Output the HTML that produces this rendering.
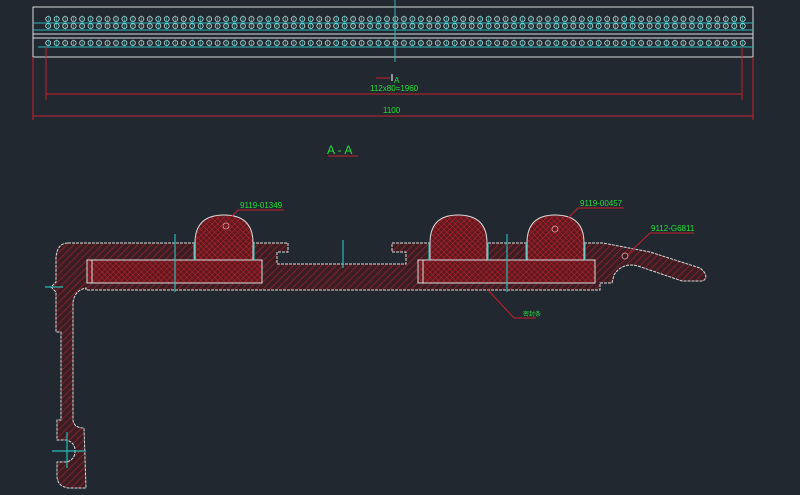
<!DOCTYPE html>
<html><head><meta charset="utf-8"><style>
html,body{margin:0;padding:0;background:#212830;overflow:hidden}
svg{display:block}
text{font-family:"Liberation Sans","Noto Sans CJK SC",sans-serif;fill:#22e03a}
</style></head><body>
<svg width="800" height="495" viewBox="0 0 800 495" xmlns="http://www.w3.org/2000/svg">
<defs>
<pattern id="circ" x="44" y="0" width="8.47" height="60" patternUnits="userSpaceOnUse">
<circle cx="4.2" cy="19" r="2.5" fill="none" stroke="#cfe8e8" stroke-width="0.8"/>
<line x1="4.2" y1="15.5" x2="4.2" y2="22.5" stroke="#2ac0c0" stroke-width="0.6"/>
<circle cx="4.2" cy="26" r="2.5" fill="none" stroke="#cfe8e8" stroke-width="0.8"/>
<line x1="4.2" y1="22.5" x2="4.2" y2="29.5" stroke="#2ac0c0" stroke-width="0.6"/>
<circle cx="4.2" cy="43" r="2.5" fill="none" stroke="#cfe8e8" stroke-width="0.8"/>
<line x1="4.2" y1="39.5" x2="4.2" y2="46.5" stroke="#2ac0c0" stroke-width="0.6"/>
</pattern>
<pattern id="h1" width="5" height="5" patternUnits="userSpaceOnUse" patternTransform="rotate(45)">
<rect width="5" height="5" fill="#3a1e24"/>
<line x1="0" y1="0" x2="0" y2="5" stroke="#a8242e" stroke-width="1.2"/>
</pattern>
<pattern id="h2" width="4" height="4" patternUnits="userSpaceOnUse" patternTransform="rotate(45)">
<rect width="4" height="4" fill="#5e181e"/>
<line x1="0" y1="0" x2="0" y2="4" stroke="#b8262f" stroke-width="1.1"/>
<line x1="0" y1="0" x2="4" y2="0" stroke="#b8262f" stroke-width="1.1"/>
</pattern>
</defs>

<rect x="33" y="7" width="720" height="50" fill="none" stroke="#d8dcdc" stroke-width="1"/>
<line x1="33" y1="23" x2="753" y2="23" stroke="#2ab8b8" stroke-width="0.9"/>
<line x1="33" y1="30" x2="753" y2="30" stroke="#2ab8b8" stroke-width="0.9"/>
<line x1="33" y1="34" x2="753" y2="34" stroke="#d8dcdc" stroke-width="0.9"/>
<line x1="33" y1="38" x2="753" y2="38" stroke="#d8dcdc" stroke-width="0.9"/>
<line x1="38" y1="47" x2="753" y2="47" stroke="#2ab8b8" stroke-width="0.9"/>
<rect x="44" y="14" width="703" height="34" fill="url(#circ)"/>
<line x1="395" y1="0" x2="395" y2="62" stroke="#2ab8b8" stroke-width="1"/>

<g stroke="#c8202c" stroke-width="1" fill="none">
<line x1="33" y1="57" x2="33" y2="120"/>
<line x1="46" y1="47" x2="46" y2="100"/>
<line x1="742" y1="47" x2="742" y2="100"/>
<line x1="753" y1="57" x2="753" y2="120"/>
<line x1="46" y1="94" x2="742" y2="94"/>
<line x1="33" y1="116" x2="753" y2="116"/>
<line x1="376" y1="78" x2="390" y2="78"/>
<line x1="328" y1="156" x2="358" y2="156"/>
</g>
<line x1="392" y1="74" x2="392" y2="81" stroke="#fff" stroke-width="1"/>
<text x="394" y="83" font-size="8">A</text>
<text x="370" y="91" font-size="8">112x80=1960</text>
<text x="383" y="113" font-size="8">1100</text>
<text x="327" y="154" font-size="12">A - A</text>

<path d="M68 243 L288 243 L288 252 L277 252 L277 264 L406 264 L406 252 L392 252 L392 243 L603 243 L650 252 L700 268 Q710 276 703 281 L682 281 L638 266 Q622 262 614 275 L612 283 L600 283 L600 290 L86 290 L86 288 Q75 290 73 302 L73 420 Q74 428 84 428 L86 488 L68 488 Q57 486 57 476 L57 462 L66 462 Q75 460 75 451 Q75 442 66 440 L57 440 L57 420 L61 420 L61 332 L56 332 L56 292 L51 287 L56 282 L56 258 Q57 243 68 243 Z" fill="url(#h1)" stroke="#d8dcdc" stroke-width="1" stroke-dasharray="3 1"/>
<rect x="87" y="260" width="175" height="23" fill="url(#h2)" stroke="#d8dcdc" stroke-width="1"/>
<rect x="418" y="260" width="177" height="23" fill="url(#h2)" stroke="#d8dcdc" stroke-width="1"/>
<line x1="92" y1="260" x2="92" y2="283" stroke="#d8dcdc"/>
<line x1="423" y1="260" x2="423" y2="283" stroke="#d8dcdc"/>
<path d="M195 260 L195 243 Q195 215 224 215 Q253 215 253 243 L253 260 Z" fill="url(#h2)" stroke="#d8dcdc" stroke-width="1"/>
<path d="M430 260 L430 243 Q430 215 458 215 Q487 215 487 243 L487 260 Z" fill="url(#h2)" stroke="#d8dcdc" stroke-width="1"/>
<path d="M527 260 L527 243 Q527 215 555 215 Q584 215 584 243 L584 260 Z" fill="url(#h2)" stroke="#d8dcdc" stroke-width="1"/>
<g stroke="#2ab8b8" stroke-width="1.2">
<line x1="194" y1="243" x2="194" y2="260"/><line x1="254" y1="243" x2="254" y2="260"/>
<line x1="429" y1="243" x2="429" y2="260"/><line x1="488" y1="243" x2="488" y2="260"/>
<line x1="526" y1="243" x2="526" y2="260"/><line x1="585" y1="243" x2="585" y2="260"/>
<line x1="175" y1="234" x2="175" y2="292"/>
<line x1="343" y1="240" x2="343" y2="268"/>
<line x1="507" y1="234" x2="507" y2="292"/>
<line x1="45" y1="287" x2="63" y2="287"/>
<line x1="67" y1="432" x2="67" y2="468"/>
<line x1="52" y1="451" x2="86" y2="451"/>
</g>
<g fill="none" stroke="#e0a0a0" stroke-width="0.8">
<circle cx="226" cy="226" r="3"/><circle cx="555" cy="229" r="3"/><circle cx="625" cy="256" r="3"/>
</g>
<g stroke="#c8202c" stroke-width="1" fill="none">
<polyline points="232,216 238,210 284,210"/>
<polyline points="568,218 578,208 624,208"/>
<polyline points="628,254 650,233 694,233"/>
<polyline points="488,290 514,318 536,318"/>
</g>
<text x="240" y="208" font-size="8">9119-01349</text>
<text x="580" y="206" font-size="8">9119-00457</text>
<text x="651" y="231" font-size="8">9112-G6811</text>
<text x="523" y="316" font-size="6">密封条</text>
</svg>
</body></html>
